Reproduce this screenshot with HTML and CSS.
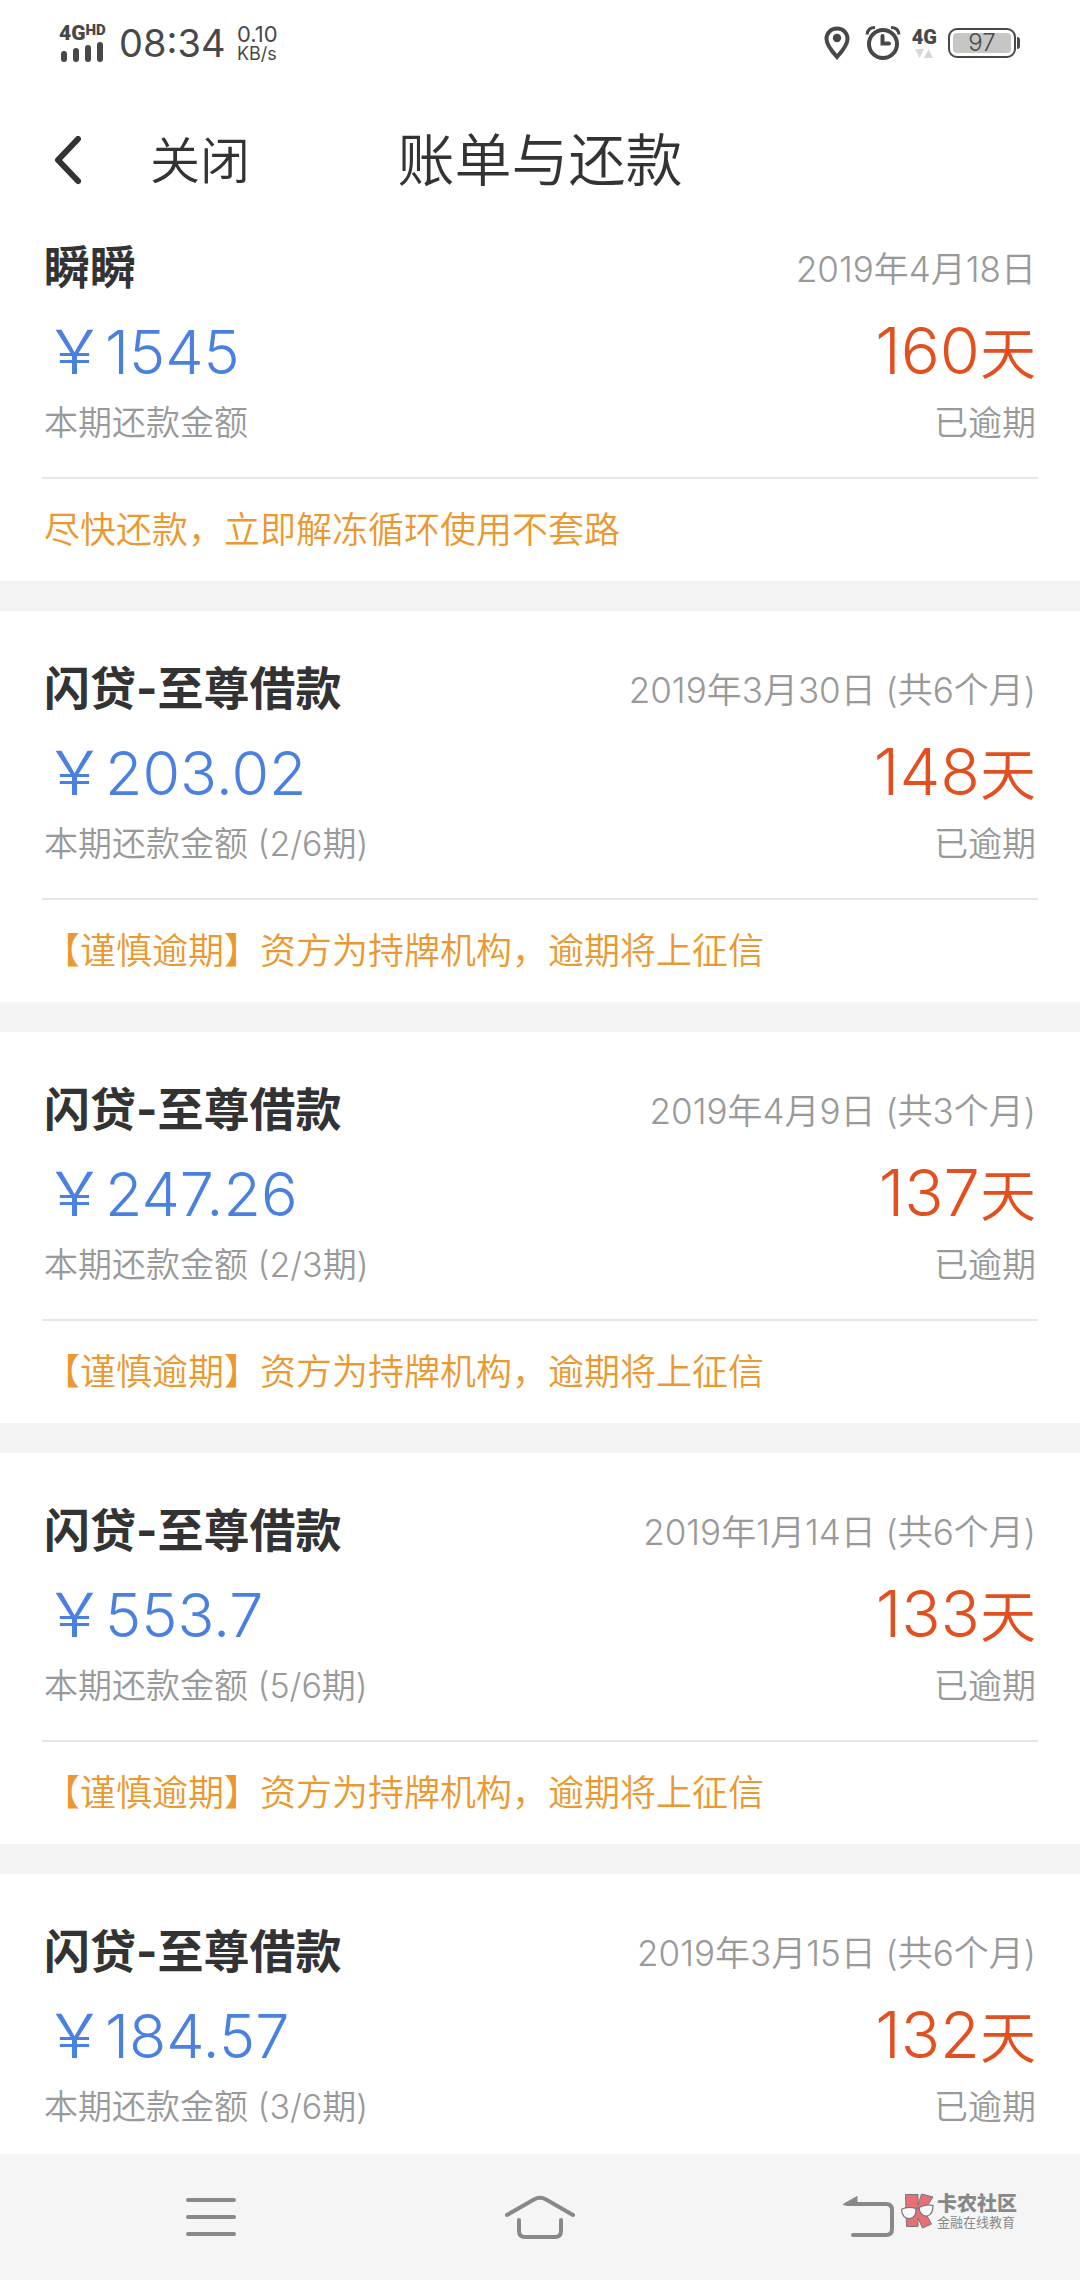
FILE: index.html
```html
<!DOCTYPE html>
<html lang="zh-CN">
<head>
<meta charset="utf-8">
<meta name="viewport" content="width=device-width, initial-scale=1">
<title>账单与还款</title>
<link rel="stylesheet" href="styles.css">
</head>
<body>
<div class="app">
  <div class="status">
    <div class="signal">
      <div class="network">4G<sup class="hd">HD</sup></div>
      <svg width="44" height="20" viewBox="0 0 44 20" fill="#484848" aria-hidden="true">
        <rect x="2" y="9" width="6" height="11" rx="3"/><rect x="14" y="6" width="6" height="14" rx="3"/>
        <rect x="26" y="3" width="6" height="17" rx="3"/><rect x="38" y="0" width="6" height="20" rx="3"/>
      </svg>
    </div>
    <div class="clock">08:34</div>
    <div class="speed"><span>0.10</span><span class="unit">KB/s</span></div>
    <div class="indicators">
      <svg width="26" height="34" viewBox="0 0 26 34" aria-hidden="true">
        <path d="M13 2.500C6.500 2.500 2.500 7.300 2.500 13C2.500 19 8 25.500 13 31C18 25.500 23.500 19 23.500 13C23.500 7.300 19.500 2.500 13 2.500Z" fill="none" stroke="#484848" stroke-width="4"/>
        <circle cx="13" cy="12" r="4.200" fill="#484848"/>
      </svg>
      <svg class="alarm" width="36" height="36" viewBox="0 0 36 36" fill="none" stroke="#484848" aria-hidden="true">
        <circle cx="18" cy="19" r="14" stroke-width="4"/>
        <path d="M17.500 11V18.500H24" stroke-width="4" stroke-linecap="round"/>
        <path d="M2 9.500C2.500 5 5.500 2.500 10 2.500M34 9.500C33.500 5 30.500 2.500 26 2.500" stroke-width="3"/>
      </svg>
      <div class="data">
        <span>4G</span>
        <svg width="18" height="9" viewBox="0 0 18 9" fill="#d8d8d8" aria-hidden="true"><path d="M0 0H9L4.500 9ZM9 9H18L13.500 0Z"/></svg>
      </div>
      <div class="battery"><span class="level">97</span></div>
    </div>
  </div>

  <header class="header">
    <button class="back" type="button" aria-label="返回">
      <svg width="28" height="50" viewBox="0 0 28 50" fill="none" stroke="#333" stroke-width="6" stroke-linecap="round" stroke-linejoin="round"><path d="M25 3L5 24L25 45"/></svg>
    </button>
    <button class="close" type="button">关闭</button>
    <h1 class="heading">账单与还款</h1>
  </header>

  <main class="bills">
    <article class="bill bill-first">
      <div class="row row-name"><h2 class="name">瞬瞬</h2><span class="muted">2019年4月18日</span></div>
      <div class="row row-sum"><span class="amount">￥1545</span><span class="days">160<span class="day-unit">天</span></span></div>
      <div class="row row-label muted"><span>本期还款金额</span><span>已逾期</span></div>
      <p class="note">尽快还款，立即解冻循环使用不套路</p>
    </article>
    <article class="bill">
      <div class="row row-name"><h2 class="name">闪贷-至尊借款</h2><span class="muted">2019年3月30日 (共6个月)</span></div>
      <div class="row row-sum"><span class="amount">￥203.02</span><span class="days">148<span class="day-unit">天</span></span></div>
      <div class="row row-label muted"><span>本期还款金额 (2/6期)</span><span>已逾期</span></div>
      <p class="note">【谨慎逾期】资方为持牌机构，逾期将上征信</p>
    </article>
    <article class="bill">
      <div class="row row-name"><h2 class="name">闪贷-至尊借款</h2><span class="muted">2019年4月9日 (共3个月)</span></div>
      <div class="row row-sum"><span class="amount">￥247.26</span><span class="days">137<span class="day-unit">天</span></span></div>
      <div class="row row-label muted"><span>本期还款金额 (2/3期)</span><span>已逾期</span></div>
      <p class="note">【谨慎逾期】资方为持牌机构，逾期将上征信</p>
    </article>
    <article class="bill">
      <div class="row row-name"><h2 class="name">闪贷-至尊借款</h2><span class="muted">2019年1月14日 (共6个月)</span></div>
      <div class="row row-sum"><span class="amount">￥553.7</span><span class="days">133<span class="day-unit">天</span></span></div>
      <div class="row row-label muted"><span>本期还款金额 (5/6期)</span><span>已逾期</span></div>
      <p class="note">【谨慎逾期】资方为持牌机构，逾期将上征信</p>
    </article>
    <article class="bill">
      <div class="row row-name"><h2 class="name">闪贷-至尊借款</h2><span class="muted">2019年3月15日 (共6个月)</span></div>
      <div class="row row-sum"><span class="amount">￥184.57</span><span class="days">132<span class="day-unit">天</span></span></div>
      <div class="row row-label muted"><span>本期还款金额 (3/6期)</span><span>已逾期</span></div>
    </article>
  </main>

  <nav class="nav">
    <button type="button" aria-label="菜单">
      <svg width="50" height="38" viewBox="0 0 50 38" fill="none" stroke="#898989" stroke-width="4" stroke-linecap="round"><path d="M2 2H48M2 19H48M2 36H48"/></svg>
    </button>
    <button type="button" aria-label="主页">
      <svg width="70" height="44" viewBox="0 0 70 44" fill="none" stroke="#898989" stroke-width="4" stroke-linecap="round"><path d="M2 20L29 4.500Q35 1 41 4.500L68 20M14 25V36Q14 42 20 42H50Q56 42 56 36V25"/></svg>
    </button>
    <button type="button" aria-label="返回">
      <svg width="52" height="42" viewBox="0 0 52 42" fill="none" stroke="#898989" stroke-width="4" stroke-linecap="round"><path d="M4 8H43Q49 8 49 14V33Q49 39 43 39H10"/><path d="M0 8.500L14 .5V8.500Z" fill="#898989" stroke-width="1" stroke-linejoin="round"/></svg>
    </button>
    <div class="brand">
      <svg width="34" height="36" viewBox="0 0 34 36" aria-hidden="true">
        <path d="M5.500 1.500H18V12L21.500 1L33 4L24 17.500L31.500 31L22.500 35L18 25V33.500H6.500Z" fill="#e96f77" stroke="#777" stroke-width="1"/>
        <path d="M1 16.500Q8 13 16 15.500Q16.500 25 10 25.500Q2.500 26 1.500 17M19 14.500Q26 10.500 33 12.500Q33 22 27 23Q20 23.500 19 14.500" fill="#f8f8f8" stroke="#777" stroke-width="1.200"/>
        <path d="M16 16L19 15" stroke="#777" stroke-width="1.500"/>
      </svg>
      <div class="brand-text"><span class="brand-name">卡农社区</span><span class="brand-tag">金融在线教育</span></div>
    </div>
  </nav>
</div>
</body>
</html>
```
FILE: styles.css
```css
* {
  box-sizing: border-box;
}

body,
h1,
h2,
p {
  margin: 0;
}

body {
  background: #fff;
  color: #333;
  font-family: Inter, "Noto Sans CJK SC", sans-serif;
  font-weight: 350;
}

button {
  border: 0;
  padding: 0;
  background: none;
  color: inherit;
  font: inherit;
}

svg {
  display: block;
  flex: none;
}

.app {
  display: flex;
  flex-direction: column;
  min-height: 100vh;
}

/* Status bar */
.status {
  display: flex;
  align-items: center;
  height: 86px;
  padding: 0 60px 0 59px;
  color: #484848;
}

.signal {
  width: 60px;
}

.network {
  display: flex;
  height: 18px;
  font: 900 21px/18px Roboto, sans-serif;
}

.hd {
  font-size: 15px;
  line-height: 12px;
}

.clock {
  width: 118px;
  font-size: 38px;
  font-weight: 400;
  line-height: 48px;
}

.speed {
  display: flex;
  flex-direction: column;
  font-size: 22px;
  font-weight: 400;
  line-height: 22px;
}

.unit {
  font-size: 18px;
  line-height: 18px;
}

.indicators {
  display: flex;
  align-items: center;
  margin-left: auto;
}

.alarm {
  margin: 0 11px 0 15px;
}

.data {
  display: flex;
  flex-direction: column;
  align-items: center;
  gap: 3px;
  font: 900 20px/18px Roboto, sans-serif;
}

.battery {
  position: relative;
  width: 68px;
  height: 30px;
  margin: 0 4px 0 11px;
  padding: 3px;
  border: 2px solid #484848;
  border-radius: 9px;
}

.battery::after {
  content: "";
  position: absolute;
  top: 7px;
  right: -6px;
  width: 3px;
  height: 12px;
  border-radius: 0 3px 3px 0;
  background: #484848;
}

.level {
  display: block;
  border-radius: 4px;
  background: #c6c6c4;
  font-size: 24px;
  line-height: 20px;
  text-align: center;
}

/* Page header */
.header {
  display: grid;
  grid-template-columns: 97px 1fr auto 1fr 97px;
  align-items: center;
  height: 145px;
  padding: 5px 53px 0;
}

.close {
  justify-self: start;
  font-size: 50px;
  line-height: 72px;
}

.heading {
  font-size: 57px;
  font-weight: 350;
  line-height: 84px;
}

/* Bills */
.bills {
  display: flex;
  flex: 1;
  flex-direction: column;
  gap: 30px;
  background: #f4f4f4;
}

.bill {
  padding: 41px 42px 0;
  background: #fff;
}

.bill:last-child {
  flex: 1;
}

.bill-first {
  padding-top: 0;
}

.row {
  display: flex;
  align-items: center;
  justify-content: space-between;
  padding: 0 2px;
}

.row-name {
  height: 66px;
}

.row-sum {
  height: 100px;
}

.row-label {
  height: 46px;
}

.name {
  font-size: 46px;
  font-weight: 700;
}

.muted {
  color: #999;
  font-size: 34px;
}

.row-name .muted {
  padding-top: 4px;
  font-size: 35px;
}

.amount {
  color: #4a80e0;
  font-size: 61px;
}

.days {
  padding-top: 4px;
  color: #e2501f;
  font-size: 65px;
}

.day-unit {
  font-size: 56px;
}

.note {
  margin-top: 34px;
  padding: 0 2px;
  border-top: 2px solid #e6e6e6;
  color: #ea982f;
  font-size: 36px;
  line-height: 102px;
}

/* System navigation */
.nav {
  position: sticky;
  bottom: 0;
  display: flex;
  height: 126px;
  padding: 0 46px;
  background: #f5f5f5;
}

.nav button {
  display: flex;
  flex: 1;
  align-items: center;
  justify-content: center;
}

.brand {
  position: absolute;
  top: 39px;
  right: 63px;
  display: flex;
  gap: 3px;
  color: #888;
}

.brand-text {
  display: flex;
  flex-direction: column;
}

.brand-name {
  font-size: 20px;
  font-weight: 900;
  line-height: 22px;
}

.brand-tag {
  font-size: 13px;
  font-weight: 400;
  line-height: 14px;
}
```
